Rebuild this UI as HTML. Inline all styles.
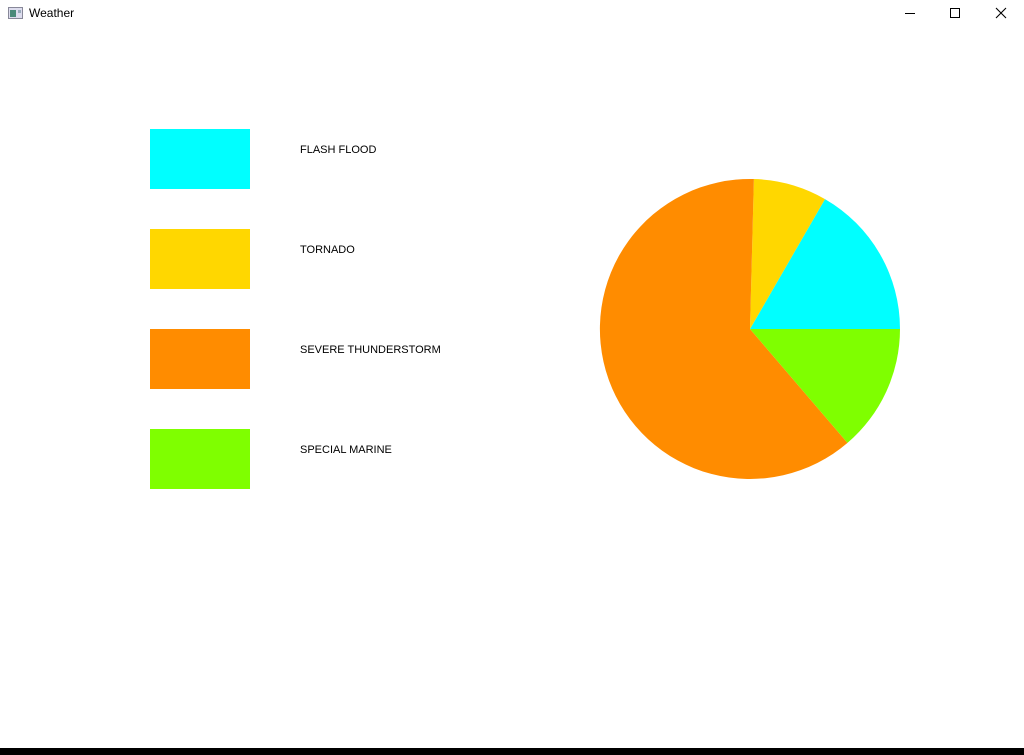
<!DOCTYPE html>
<html><head><style>
body{margin:0;width:1024px;height:755px;background:#fff;position:relative;overflow:hidden;font-family:"Liberation Sans",sans-serif;}
.t{position:absolute;font-size:11px;color:#000;}
.sw{position:absolute;left:150px;width:100px;height:60px;}
</style></head><body>
<svg style="position:absolute;left:8px;top:7px" width="16" height="13"><rect x="0.5" y="0.5" width="14" height="11" fill="#dde" stroke="#889"/><rect x="2" y="3" width="6" height="7" fill="#4a8a7a"/><rect x="10" y="3" width="3" height="3" fill="#9ab"/></svg>
<div class="t" style="left:29px;top:6px;font-size:12px">Weather</div>
<svg style="position:absolute;left:880px;top:0" width="144" height="30">
<line x1="25" y1="13.5" x2="35" y2="13.5" stroke="#000"/>
<rect x="70.5" y="8.5" width="9" height="9" fill="none" stroke="#000"/>
<path d="M116 8 L126 18 M126 8 L116 18" stroke="#000" stroke-width="1.1"/>
</svg>
<div class="sw" style="top:129px;background:#00ffff"></div>
<div class="sw" style="top:229px;background:#ffd700"></div>
<div class="sw" style="top:329px;background:#ff8c00"></div>
<div class="sw" style="top:429px;background:#7fff00"></div>
<div class="t" style="left:300px;top:144px">FLASH FLOOD</div>
<div class="t" style="left:300px;top:244px">TORNADO</div>
<div class="t" style="left:300px;top:344px">SEVERE THUNDERSTORM</div>
<div class="t" style="left:300px;top:444px">SPECIAL MARINE</div>
<svg style="position:absolute;left:0;top:0" width="1024" height="755">
<path d="M750,329 L900,329 A150,150 0 0 0 825,199.1 Z" fill="#00ffff"/>
<path d="M750,329 L825,199.1 A150,150 0 0 0 753.9,179.05 Z" fill="#ffd700"/>
<path d="M750,329 L753.9,179.05 A150,150 0 1 0 847.5,442.9 Z" fill="#ff8c00"/>
<path d="M750,329 L847.5,442.9 A150,150 0 0 0 900,329 Z" fill="#7fff00"/>
<rect x="0" y="748" width="1024" height="7" fill="#000"/>
</svg>
</body></html>
